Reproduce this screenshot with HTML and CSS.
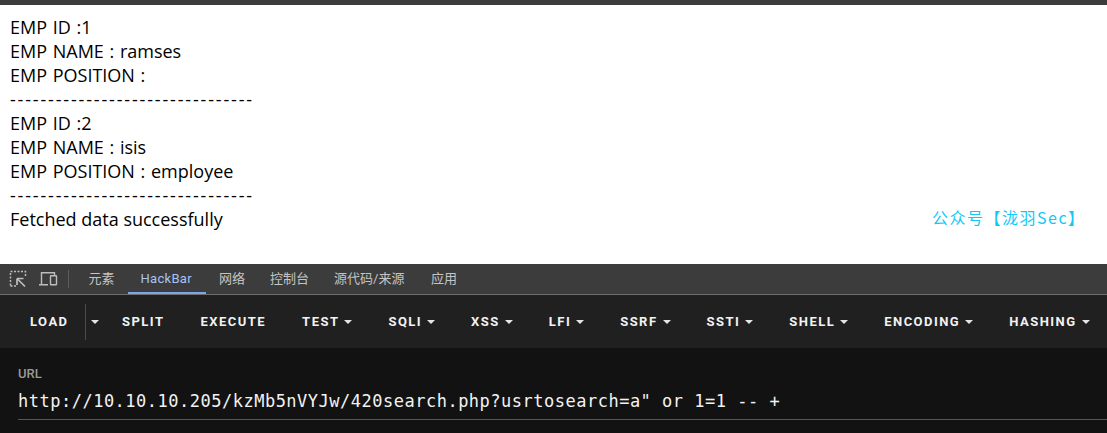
FILE: index.html
```html
<!DOCTYPE html>
<html lang="zh">
<head>
<meta charset="utf-8">
<title>HackBar</title>
<link rel="stylesheet" href="styles.css">
</head>
<body>
<div class="topbar"></div>
<main class="output">
<div class="field">EMP ID :1</div>
<div class="field">EMP NAME : ramses</div>
<div class="field">EMP POSITION :</div>
<div class="rule">--------------------------------</div>
<div class="field">EMP ID :2</div>
<div class="field">EMP NAME : isis</div>
<div class="field">EMP POSITION : employee</div>
<div class="rule">--------------------------------</div>
<div>Fetched data successfully</div>
<span class="watermark">公众号【泷羽Sec】</span>
</main>
<nav class="tabs">
<svg class="icon" width="18" height="18" viewBox="0 0 18 18" fill="none" stroke="#bdbdbd"><path d="M1.500 15.500V1.500H16.500V7.500M1.500 16H7" stroke-width="1.500" stroke-dasharray="2 1.500"/><path d="M8 8.500h6.500M8 8.500V15M8.500 9l7.500 7.500" stroke-width="1.700"/></svg>
<svg class="icon" width="20" height="18" viewBox="0 0 20 18" fill="none" stroke="#bdbdbd" stroke-width="1.400"><path d="M3.500 14V2.700H16.500V5M1 14.700H10"/><rect x="12.500" y="5.700" width="6" height="9" rx="0.500"/></svg>
<span class="divider"></span>
<a class="tab">元素</a>
<a class="tab active">HackBar</a>
<a class="tab">网络</a>
<a class="tab">控制台</a>
<a class="tab">源代码/来源</a>
<a class="tab">应用</a>
</nav>
<section class="toolbar">
<button class="btn load">LOAD</button>
<span class="split-caret"><i class="caret"></i></span>
<button class="btn">SPLIT</button>
<button class="btn">EXECUTE</button>
<button class="btn">TEST<i class="caret"></i></button>
<button class="btn">SQLI<i class="caret"></i></button>
<button class="btn">XSS<i class="caret"></i></button>
<button class="btn">LFI<i class="caret"></i></button>
<button class="btn">SSRF<i class="caret"></i></button>
<button class="btn">SSTI<i class="caret"></i></button>
<button class="btn">SHELL<i class="caret"></i></button>
<button class="btn">ENCODING<i class="caret"></i></button>
<button class="btn">HASHING<i class="caret"></i></button>
</section>
<section class="url-panel">
<div class="url-label">URL</div>
<div class="url-value">http://10.10.10.205/kzMb5nVYJw/420search.php?usrtosearch=a" or 1=1 -- +</div>
</section>
</body>
</html>
```
FILE: styles.css
```css
* { box-sizing: border-box; }
html, body { margin: 0; height: 100%; }
body { width: 1107px; height: 433px; overflow: hidden; display: flex; flex-direction: column; background: #fff; }
.topbar { height: 5px; background: #3c3c3c; }
.output { position: relative; height: 259px; padding: 10px 10px 0; font: 18px/24px "Open Sans", sans-serif; color: #000; }
.field { word-spacing: 1px; }
.rule { letter-spacing: 1.83px; }
.watermark { position: absolute; left: 932px; top: 200px; font: 400 16px/24px "Noto Sans CJK SC", sans-serif; letter-spacing: 1.5px; color: #12c8f8; }
.tabs { height: 31px; display: flex; align-items: center; background: #3c3c3c; border-bottom: 1px solid #6e6e6e; color: #c4c4c4; font: 13px/30px Roboto, "Noto Sans CJK SC", sans-serif; }
.icon { flex: none; }
.icon:first-child { margin-left: 9px; margin-right: 11px; }
.divider { width: 1px; height: 18px; margin: 0 7px 0 10px; background: #5c5c5c; }
.tab { height: 30px; padding: 0 12.5px; }
.tab:last-child { padding-left: 14px; }
.tab.active { margin: 0 1px 0 0.5px; padding: 0 13px; width: 78px; color: #a5c4f7; border-bottom: 2px solid #7ca5ea; letter-spacing: 0.3px; }
.toolbar { height: 53px; display: flex; align-items: center; padding-left: 12px; background: #202020; }
.btn { flex: none; display: flex; align-items: center; padding: 0 18px; border: 0; background: none; color: #f2f2f2; font: 700 13px/20px Roboto, sans-serif; letter-spacing: 1.47px; }
.btn.load { padding-right: 16px; }
.caret { display: inline-block; margin-left: 5px; border-top: 4px solid #e6e6e6; border-left: 4px solid transparent; border-right: 4px solid transparent; }
.split-caret { flex: none; display: flex; align-items: center; width: 19.5px; height: 36px; border-left: 1px solid #4c4c4c; }
.url-panel { flex: 1; padding: 18px 0 0 18px; background: #121212; }
.url-label { font: 500 13px/16px Roboto, sans-serif; color: #9a9a9a; }
.url-value { width: 1089px; height: 33px; padding-top: 1px; margin-top: 5px; border-bottom: 1px solid #555; font: 17px/26px "DejaVu Sans Mono", monospace; letter-spacing: 0.5px; color: #f2f2f2; }
```
